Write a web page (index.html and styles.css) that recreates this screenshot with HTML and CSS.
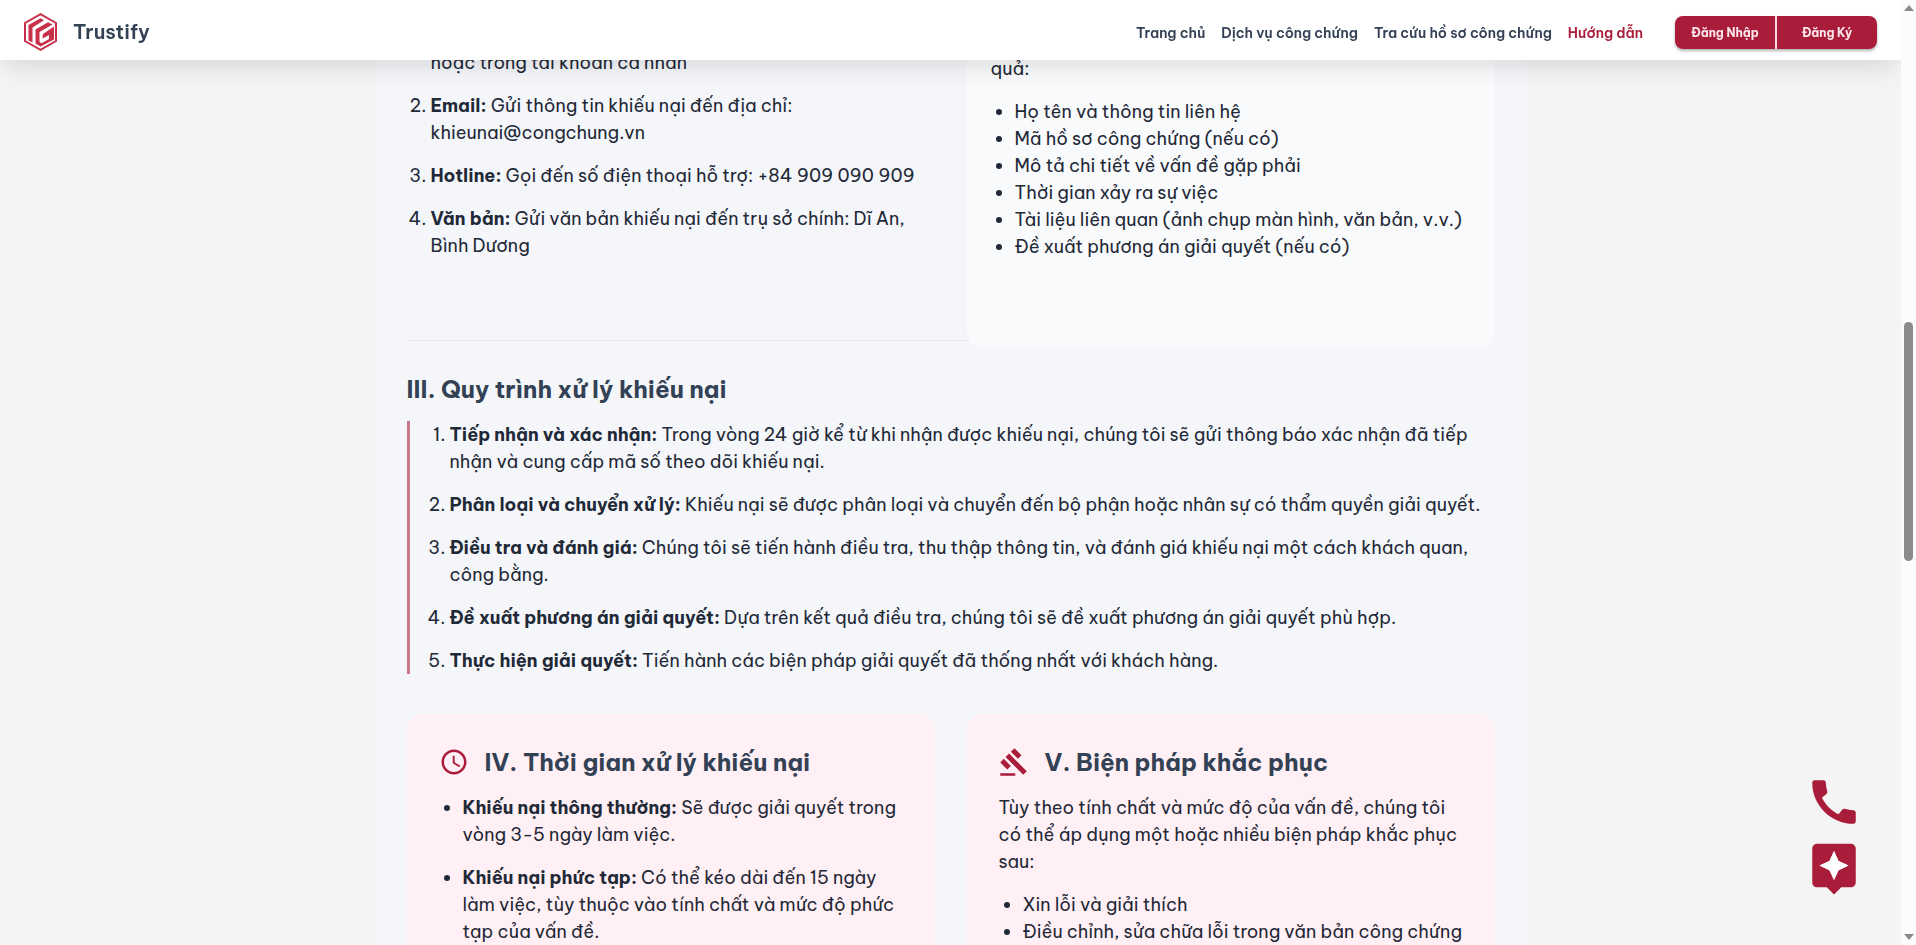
FILE: index.html
```html
<!DOCTYPE html>
<html lang="vi">
<head>
<meta charset="utf-8">
<title>Trustify</title>
<link rel="stylesheet" href="styles.css">
</head>
<body>
<header class="topbar">
  <a class="brand" href="#">
    <svg class="brand-logo" viewBox="0 0 33 38" aria-hidden="true">
      <path d="M16.500 1.200 32 10V28L16.500 36.800 1 28V10Z" fill="none" stroke="#c8304a" stroke-width="2"/>
      <path d="M4.500 27.500V12L16.500 5.300l3.500 1.900L8.500 14.500V29.500ZM11.500 30.500V16.500L24 9.200l4.500 2.300L15.500 19v10l2 1.200 7.500-4.300v-4l-3 1.800-3.500 1.800.500-4.500L30 13.500v13L16.500 33.500Z" fill="#c8304a"/>
    </svg>
    <span>Trustify</span>
  </a>
  <nav class="nav">
    <a href="#">Trang chủ</a>
    <a href="#">Dịch vụ công chứng</a>
    <a href="#">Tra cứu hồ sơ công chứng</a>
    <a class="active" href="#">Hướng dẫn</a>
  </nav>
  <div class="auth">
    <button type="button">Đăng Nhập</button>
    <button type="button">Đăng Ký</button>
  </div>
</header>

<div class="page">
  <main class="content">
    <section class="row submit">
      <div class="channels">
        <p class="tail">hoặc trong tài khoản cá nhân</p>
        <ol class="spaced" start="2">
          <li><strong>Email:</strong> Gửi thông tin khiếu nại đến địa chỉ: khieunai@congchung.vn</li>
          <li><strong>Hotline:</strong> Gọi đến số điện thoại hỗ trợ: +84 909 090 909</li>
          <li><strong>Văn bản:</strong> Gửi văn bản khiếu nại đến trụ sở chính: Dĩ An, Bình Dương</li>
        </ol>
      </div>
      <div class="details">
        <p>quả:</p>
        <ul>
          <li>Họ tên và thông tin liên hệ</li>
          <li>Mã hồ sơ công chứng (nếu có)</li>
          <li>Mô tả chi tiết về vấn đề gặp phải</li>
          <li>Thời gian xảy ra sự việc</li>
          <li>Tài liệu liên quan (ảnh chụp màn hình, văn bản, v.v.)</li>
          <li>Đề xuất phương án giải quyết (nếu có)</li>
        </ul>
      </div>
    </section>

    <section class="process">
      <h2>III. Quy trình xử lý khiếu nại</h2>
      <ol class="spaced steps">
        <li><strong>Tiếp nhận và xác nhận:</strong> Trong vòng 24 giờ kể từ khi nhận được khiếu nại, chúng tôi sẽ gửi thông báo xác nhận đã tiếp nhận và cung cấp mã số theo dõi khiếu nại.</li>
        <li><strong>Phân loại và chuyển xử lý:</strong> Khiếu nại sẽ được phân loại và chuyển đến bộ phận hoặc nhân sự có thẩm quyền giải quyết.</li>
        <li><strong>Điều tra và đánh giá:</strong> Chúng tôi sẽ tiến hành điều tra, thu thập thông tin, và đánh giá khiếu nại một cách khách quan, công bằng.</li>
        <li><strong>Đề xuất phương án giải quyết:</strong> Dựa trên kết quả điều tra, chúng tôi sẽ đề xuất phương án giải quyết phù hợp.</li>
        <li><strong>Thực hiện giải quyết:</strong> Tiến hành các biện pháp giải quyết đã thống nhất với khách hàng.</li>
      </ol>
    </section>

    <section class="row">
      <div class="card">
        <h2><svg class="icon" viewBox="0 0 24 24" aria-hidden="true"><path d="M11.990 2C6.470 2 2 6.480 2 12s4.470 10 9.990 10C17.520 22 22 17.520 22 12S17.520 2 11.990 2M12 20c-4.420 0-8-3.580-8-8s3.580-8 8-8 8 3.580 8 8-3.580 8-8 8m.500-13H11v6l5.250 3.150.750-1.230-4.500-2.670z"/></svg>IV. Thời gian xử lý khiếu nại</h2>
        <ul class="spaced">
          <li><strong>Khiếu nại thông thường:</strong> Sẽ được giải quyết trong vòng 3-5 ngày làm việc.</li>
          <li><strong>Khiếu nại phức tạp:</strong> Có thể kéo dài đến 15 ngày làm việc, tùy thuộc vào tính chất và mức độ phức tạp của vấn đề.</li>
        </ul>
      </div>
      <div class="card">
        <h2><svg class="icon" viewBox="0 0 24 24" aria-hidden="true"><path d="M1 21h12v2H1zM5.245 8.070l2.830-2.827 14.140 14.142-2.828 2.828zM12.317 1l5.657 5.656-2.830 2.830-5.654-5.660zM3.825 9.485l5.657 5.657-2.828 2.828-5.657-5.657z"/></svg>V. Biện pháp khắc phục</h2>
        <p>Tùy theo tính chất và mức độ của vấn đề, chúng tôi có thể áp dụng một hoặc nhiều biện pháp khắc phục sau:</p>
        <ul>
          <li>Xin lỗi và giải thích</li>
          <li>Điều chỉnh, sửa chữa lỗi trong văn bản công chứng</li>
        </ul>
      </div>
    </section>
  </main>
</div>

<aside class="floating">
  <button type="button" aria-label="Gọi điện"><svg viewBox="0 0 24 24"><path d="M20.010 15.380c-1.230 0-2.420-.200-3.530-.560-.350-.120-.740-.030-1.010.240l-1.570 1.970c-2.830-1.350-5.480-3.900-6.890-6.830l1.950-1.660c.270-.280.350-.670.240-1.020-.370-1.110-.560-2.300-.560-3.530 0-.540-.450-.990-.990-.990H4.190C3.650 3 3 3.240 3 3.990 3 13.280 10.730 21 20.010 21c.710 0 .990-.630.990-1.180v-3.450c0-.540-.450-.990-.990-.990"/></svg></button>
  <button type="button" aria-label="Trợ lý"><svg viewBox="0 0 24 24"><path d="M19 2H5c-1.110 0-2 .900-2 2v14c0 1.100.890 2 2 2h4l3 3 3-3h4c1.100 0 2-.900 2-2V4c0-1.100-.900-2-2-2m-5.120 10.880L12 17l-1.880-4.120L6 11l4.120-1.880L12 5l1.880 4.120L18 11z"/><path class="spark" d="M13.880 12.880 12 17l-1.880-4.120L6 11l4.120-1.880L12 5l1.880 4.120L18 11z"/></svg></button>
</aside>

<div class="scrollbar" aria-hidden="true">
  <span class="arrow up"></span>
  <span class="thumb"></span>
  <span class="arrow down"></span>
</div>
</body>
</html>
```
FILE: styles.css
```css
* { box-sizing: border-box; }
html, body { height: 100%; }
body {
  margin: 0;
  overflow: hidden;
  background: #f4f4f4;
  color: #1f2937;
  font: 18px/27px "Be Vietnam Pro", Inter, "Noto Sans", sans-serif;
}
h2, p, ol, ul { margin: 0; }
h2 {
  display: flex;
  align-items: center;
  gap: 16px;
  margin-bottom: 16px;
  color: #334155;
  font-size: 24px;
  line-height: 32px;
  font-weight: 700;
}
ol, ul { padding-left: 24px; }
strong { font-weight: 700; }
.spaced { display: grid; gap: 16px; }

.topbar {
  position: fixed;
  top: 0;
  left: 0;
  right: 15px;
  z-index: 2;
  height: 60px;
  display: flex;
  align-items: center;
  padding: 4px 24px 0 24px;
  background: #fff;
  box-shadow: 0 10px 24px -4px rgba(0, 0, 0, 0.12);
}
.brand {
  display: flex;
  align-items: center;
  gap: 16px;
  margin-right: auto;
  color: #334155;
  font-size: 20px;
  line-height: 24px;
  font-weight: 600;
  text-decoration: none;
}
.brand-logo { width: 33px; height: 38px; }
.nav { display: flex; gap: 16px; padding-top: 2px; }
.nav a {
  color: #334155;
  font-size: 14px;
  font-weight: 600;
  text-decoration: none;
}
.nav .active { color: #a91d3a; }
.auth {
  display: flex;
  gap: 2px;
  margin-left: 32px;
  border-radius: 8px;
  background: #f1dce1;
  box-shadow: 0 2px 3px rgba(0, 0, 0, 0.3);
}
.auth button {
  width: 100px;
  height: 33px;
  border: 0;
  padding: 2px 0 0;
  background: #a91d3a;
  color: #fce8ec;
  font: 700 12px/18px "Be Vietnam Pro", Inter, "Noto Sans", sans-serif;
}
.auth button:first-child { border-radius: 8px 0 0 8px; }
.auth button:last-child { border-radius: 0 8px 8px 0; }

.page { height: 100%; padding-right: 15px; }
.content {
  max-width: 1152px;
  min-height: 100%;
  margin: 0 auto;
  padding: 0 32px;
  background: #f4f6fa;
}
.row {
  display: grid;
  grid-template-columns: 1fr 1fr;
  gap: 32px;
}
.submit {
  height: 341px;
  border-bottom: 1px solid #e5e7eb;
}
.channels { padding-top: 49px; }
.tail { padding: 0 0 16px 24px; }
.details {
  height: 349px;
  padding: 55px 24px 0;
  border-radius: 16px;
  background: #f9fafc;
}
.details p, .card p { margin-bottom: 16px; }
.process { padding: 32px 0 40px; }
.steps {
  padding-left: 40px;
  border-left: 3px solid #cb7789;
}
.card {
  padding: 32px;
  border-radius: 16px;
  background: #fff0f5;
}
.icon {
  width: 30px;
  height: 30px;
  fill: #a91d3a;
}

.floating {
  position: fixed;
  right: 53px;
  bottom: 48px;
  z-index: 3;
  display: grid;
  gap: 8px;
}
.floating button {
  width: 58px;
  height: 58px;
  padding: 0;
  border: 0;
  background: none;
}
.floating svg { display: block; fill: #a91d3a; }
.floating .spark { fill: #fff; }

.scrollbar {
  position: fixed;
  top: 0;
  right: 0;
  bottom: 0;
  z-index: 3;
  width: 15px;
  display: grid;
  grid-template-rows: 317px 239px 1fr;
  justify-items: center;
  padding: 5px 0;
  background: #fcfcfc;
}
.arrow {
  width: 0;
  height: 0;
  border: 5px solid transparent;
}
.arrow.up { border-top-width: 0; border-bottom: 6px solid #8b8b8b; }
.arrow.down { align-self: end; border-bottom-width: 0; border-top: 6px solid #8b8b8b; }
.thumb { width: 9px; border-radius: 5px; background: #8b8b8b; }
```
